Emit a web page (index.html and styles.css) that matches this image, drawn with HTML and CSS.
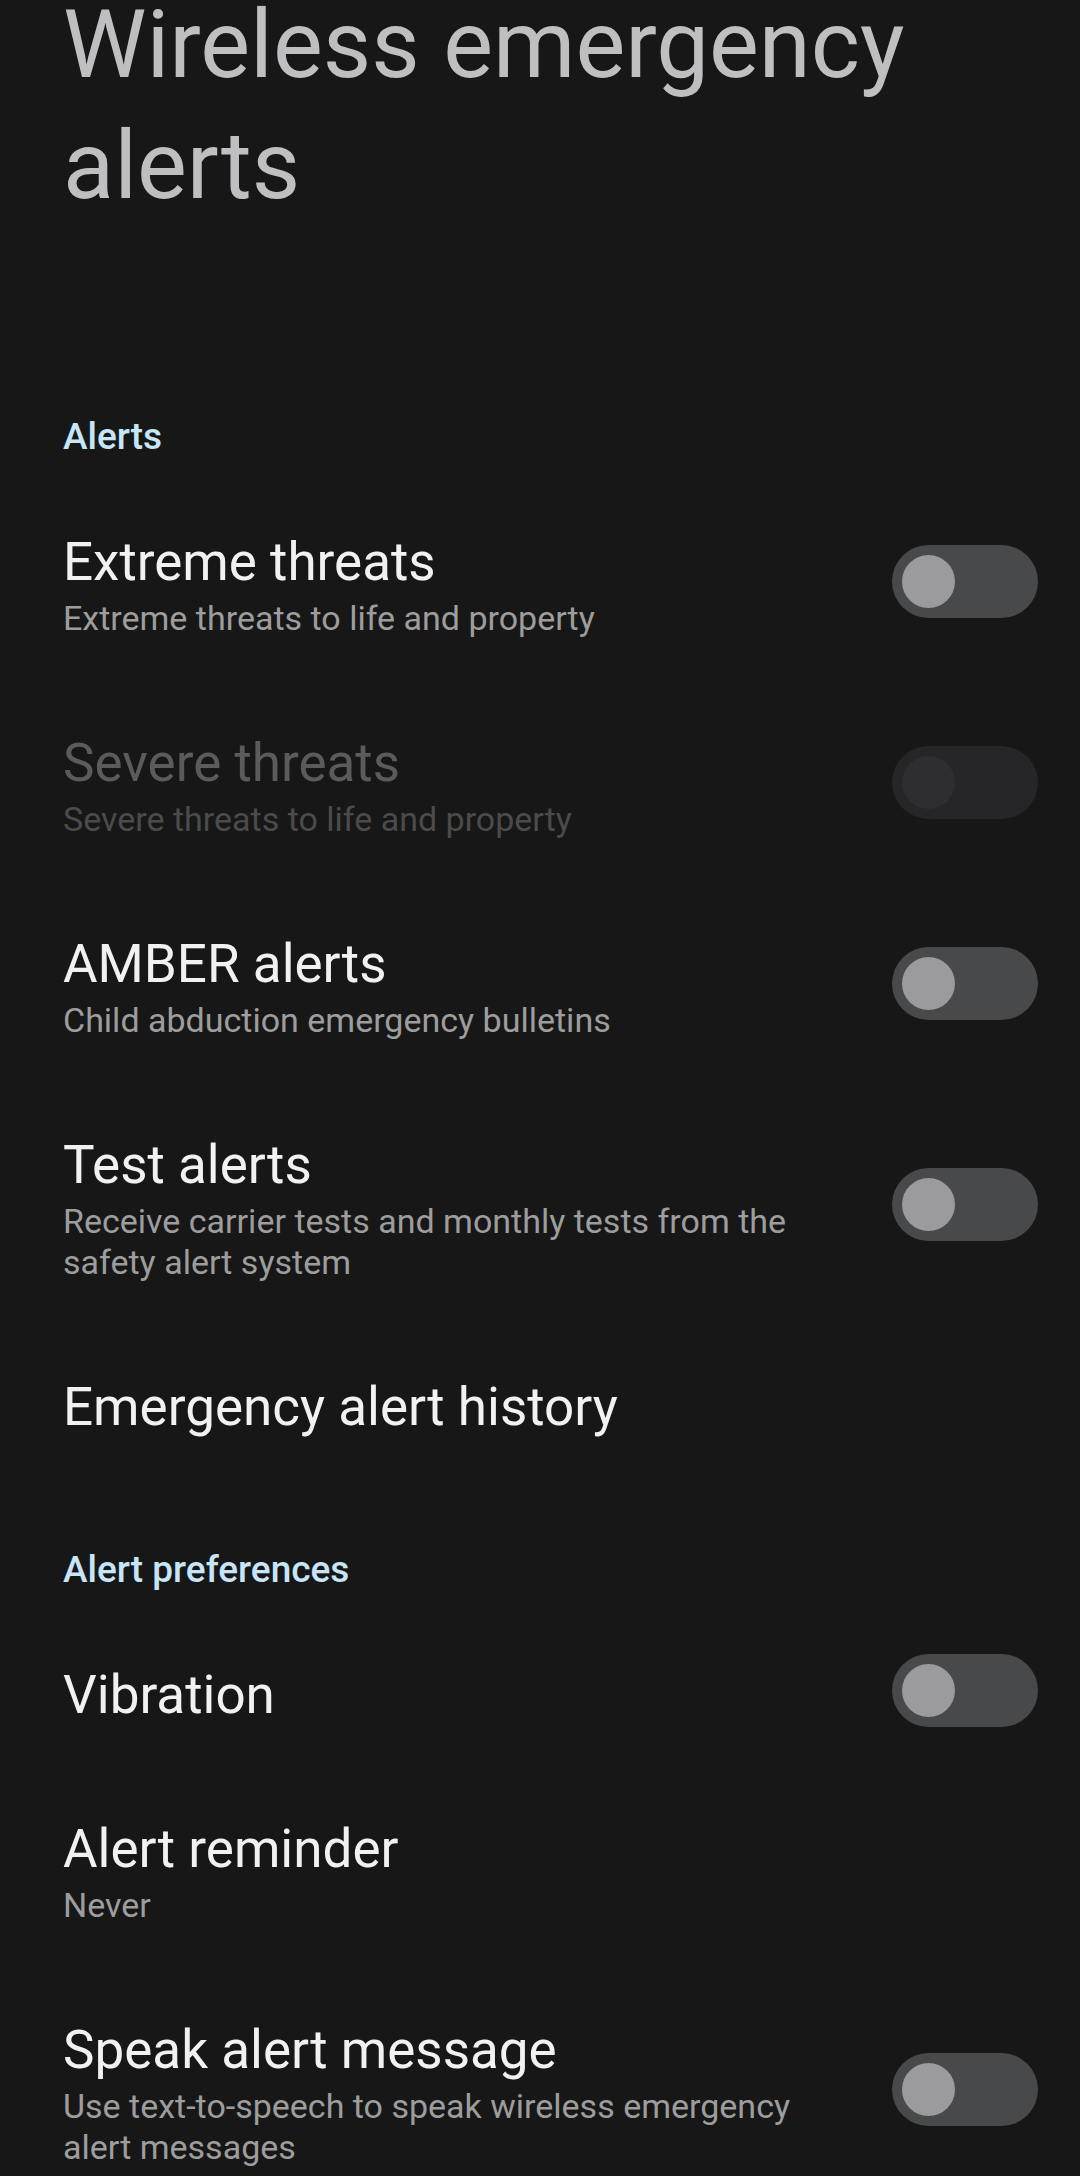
FILE: index.html
```html
<!DOCTYPE html>
<html lang="en">
<head>
<meta charset="utf-8">
<title>Wireless emergency alerts</title>
<link rel="stylesheet" href="styles.css">
</head>
<body>
<main class="screen">
  <h1 class="page-title">Wireless emergency alerts</h1>

  <section class="group">
    <h2 class="group-title">Alerts</h2>

    <div class="pref">
      <div class="pref-text">
        <div class="pref-title">Extreme threats</div>
        <div class="pref-summary">Extreme threats to life and property</div>
      </div>
      <span class="switch"><span class="thumb"></span></span>
    </div>

    <div class="pref pref-disabled">
      <div class="pref-text">
        <div class="pref-title">Severe threats</div>
        <div class="pref-summary">Severe threats to life and property</div>
      </div>
      <span class="switch"><span class="thumb"></span></span>
    </div>

    <div class="pref">
      <div class="pref-text">
        <div class="pref-title">AMBER alerts</div>
        <div class="pref-summary">Child abduction emergency bulletins</div>
      </div>
      <span class="switch"><span class="thumb"></span></span>
    </div>

    <div class="pref">
      <div class="pref-text">
        <div class="pref-title">Test alerts</div>
        <div class="pref-summary">Receive carrier tests and monthly tests from the safety alert system</div>
      </div>
      <span class="switch"><span class="thumb"></span></span>
    </div>

    <div class="pref">
      <div class="pref-text">
        <div class="pref-title">Emergency alert history</div>
      </div>
    </div>
  </section>

  <section class="group">
    <h2 class="group-title">Alert preferences</h2>

    <div class="pref">
      <div class="pref-text">
        <div class="pref-title">Vibration</div>
      </div>
      <span class="switch"><span class="thumb"></span></span>
    </div>

    <div class="pref">
      <div class="pref-text">
        <div class="pref-title">Alert reminder</div>
        <div class="pref-summary">Never</div>
      </div>
    </div>

    <div class="pref">
      <div class="pref-text">
        <div class="pref-title">Speak alert message</div>
        <div class="pref-summary">Use text-to-speech to speak wireless emergency alert messages</div>
      </div>
      <span class="switch"><span class="thumb"></span></span>
    </div>
  </section>
</main>
</body>
</html>
```

FILE: styles.css
```css
* {
  box-sizing: border-box;
}

html, body {
  margin: 0;
  padding: 0;
  background: #171717;
}

body {
  font-family: Roboto, "Liberation Sans", Arial, sans-serif;
  height: 2176px;
  overflow: hidden;
}

.screen {
  display: flex;
  flex-direction: column;
}

.page-title {
  margin: -15px 0 124px 0;
  padding: 0 63px;
  font-size: 94px;
  line-height: 121px;
  font-weight: 400;
  color: #bfbfc1;
}

.group {
  display: flex;
  flex-direction: column;
}

.group-title {
  margin: 0;
  padding: 64px 63px 26px 63px;
  font-size: 37px;
  line-height: 44px;
  font-weight: 500;
  color: #c6e5f8;
}

.pref {
  display: flex;
  align-items: center;
  padding: 47px 42px 47px 63px;
  gap: 42px;
}

.pref-text {
  flex: 1;
  min-width: 0;
}

.pref-title {
  font-size: 53px;
  line-height: 60px;
  color: #f1f1f1;
}

.pref-summary {
  margin-top: 6px;
  font-size: 34px;
  line-height: 41px;
  color: #9d9d9d;
}

.switch {
  flex: none;
  width: 146px;
  height: 73px;
  margin-top: -13px;
  margin-bottom: -4px;
  border-radius: 37px;
  background: #48494b;
  display: flex;
  align-items: center;
  padding-left: 10px;
}

.thumb {
  width: 53px;
  height: 53px;
  border-radius: 50%;
  background: #9b9b9d;
}

.pref-disabled .pref-title {
  color: #5b5b5b;
}

.pref-disabled .pref-summary {
  color: #4b4b4b;
}

.pref-disabled .switch {
  background: #262628;
}

.pref-disabled .thumb {
  background: #2e2e30;
}
```
